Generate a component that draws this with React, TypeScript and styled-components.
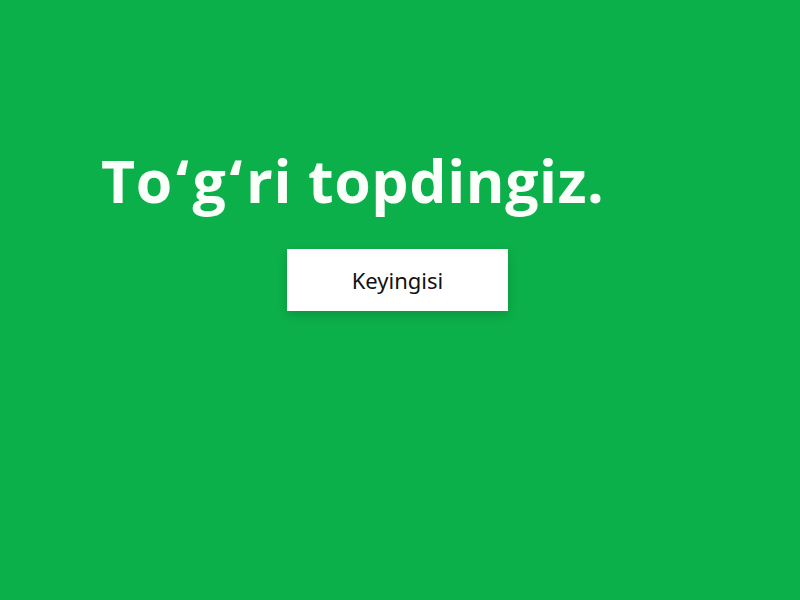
import React from 'react';
import styled, { createGlobalStyle } from 'styled-components';

const GlobalStyle = createGlobalStyle`
  html, body { margin: 0; padding: 0; }
  body {
    background: #0cb04a;
    font-family: "Open Sans", "Noto Sans", sans-serif;
  }
`;

const Screen = styled.main`
  width: 800px;
  height: 600px;
  background: #0cb04a;
  display: flex;
  flex-direction: column;
  padding: 146px 0 0 101px;
  box-sizing: border-box;
`;

const Title = styled.h1`
  margin: 0;
  font-family: "Open Sans", "Noto Sans", sans-serif;
  font-size: 59px;
  font-weight: 700;
  line-height: 68px;
  color: #fbfff9;
  letter-spacing: 0.6px;
`;

// Uzbek turned-comma letter sits with extra room on either side
const Okina = styled.span`
  margin: 0 3px;
`;

const NextButton = styled.button`
  margin: 35px 0 0 186px;
  width: 221px;
  height: 62px;
  padding: 0;
  background: #ffffff;
  border: none;
  border-radius: 0;
  box-shadow: 0 4px 10px rgba(0, 0, 0, 0.16);
  font-family: "Noto Sans", "Open Sans", sans-serif;
  font-size: 22px;
  color: #111;
  cursor: pointer;
`;

export default function App() {
  return (
    <>
      <GlobalStyle />
      <Screen>
        <Title>
          To<Okina>ʻ</Okina>g<Okina>ʻ</Okina>ri topdingiz.
        </Title>
        <NextButton>Keyingisi</NextButton>
      </Screen>
    </>
  );
}
